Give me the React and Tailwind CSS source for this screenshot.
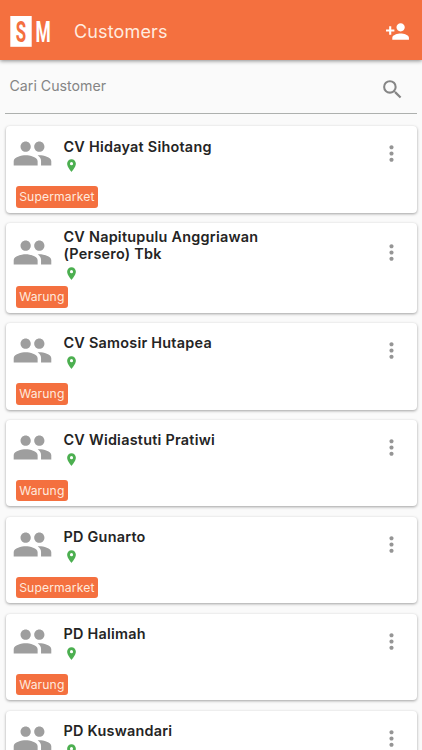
import { MdMoreVert, MdPeople, MdPersonAdd, MdPlace, MdSearch } from 'react-icons/md';

const customers = [
  { name: 'CV Hidayat Sihotang', type: 'Supermarket' },
  { name: 'CV Napitupulu Anggriawan (Persero) Tbk', type: 'Warung', tall: true },
  { name: 'CV Samosir Hutapea', type: 'Warung' },
  { name: 'CV Widiastuti Pratiwi', type: 'Warung' },
  { name: 'PD Gunarto', type: 'Supermarket' },
  { name: 'PD Halimah', type: 'Warung' },
  { name: 'PD Kuswandari', type: 'Warung' },
];

function Logo() {
  return (
    <svg className="h-[31px] w-[41px] shrink-0 overflow-visible" viewBox="0 0 41 31" fontFamily="Roboto, sans-serif" fontWeight="700">
      <rect x="0.3" width="21.4" height="30.8" fill="#ffffff" />
      <text transform="translate(5.7 25.7) scale(0.58 1)" fontSize="29" fill="#f4703f">S</text>
      <text transform="translate(25.4 25.7) scale(0.6 1)" fontSize="29" fill="#ffffff">M</text>
    </svg>
  );
}

function Header() {
  return (
    <header className="flex h-[60px] shrink-0 items-center bg-[#f4703f] pt-[3px] pr-[12.5px] pl-[10px] text-white shadow-[0_1px_4px_rgba(0,0,0,0.45)]">
      <Logo />
      <h1 className="ml-[23px] flex-1 text-[18px] leading-6 tracking-[0.15px] text-[#ffebdf]">Customers</h1>
      <MdPersonAdd className="size-[25px]" />
    </header>
  );
}

function SearchField() {
  return (
    <div className="mx-[5px] flex h-[54px] shrink-0 items-start justify-between border-b border-[#adb0ae] pr-[12px] pl-[4.5px] text-[#858585]">
      <span className="mt-[15.5px] text-[14.2px] leading-5">Cari Customer</span>
      <MdSearch className="mt-[17px] size-[25px]" />
    </div>
  );
}

function CustomerCard({ name, type, tall }) {
  return (
    <li className={`flex shrink-0 flex-col justify-between rounded-[4px] bg-white pb-[5px] pl-[6.5px] shadow-[0_1px_3px_rgba(0,0,0,0.36)] ${tall ? 'h-[89.5px]' : 'h-[86.5px]'}`}>
      <div className={`flex items-center ${tall ? 'h-[59px]' : 'h-[55px]'}`}>
        <MdPeople className="size-[41px] shrink-0 text-[#9e9e9e]" />
        <div className="ml-[10.5px] w-[220px] pt-[3.5px]">
          <p className="text-[14.4px] leading-[17.3px] font-semibold tracking-[0.25px] text-[#242424]">{name}</p>
          <MdPlace className="mt-[3.5px] size-[15px] text-[#4caf50]" />
        </div>
        <MdMoreVert className="mr-[13px] ml-auto size-[25px] text-[#959595]" />
      </div>
      <span className="ml-[3.5px] self-start rounded-[3px] bg-[#f4703f] px-[3.7px] text-[12.2px] leading-[21.5px] tracking-[0.1px] text-[#ffe9dd]">{type}</span>
    </li>
  );
}

export default function App() {
  return (
    <div className="flex h-screen flex-col overflow-hidden bg-[#fafafa] font-['Inter',sans-serif]">
      <Header />
      <SearchField />
      <ul className="mt-[12.3px] flex flex-col gap-[10.4px] px-[5.5px]">
        {customers.map((customer) => (
          <CustomerCard key={customer.name} {...customer} />
        ))}
      </ul>
    </div>
  );
}
